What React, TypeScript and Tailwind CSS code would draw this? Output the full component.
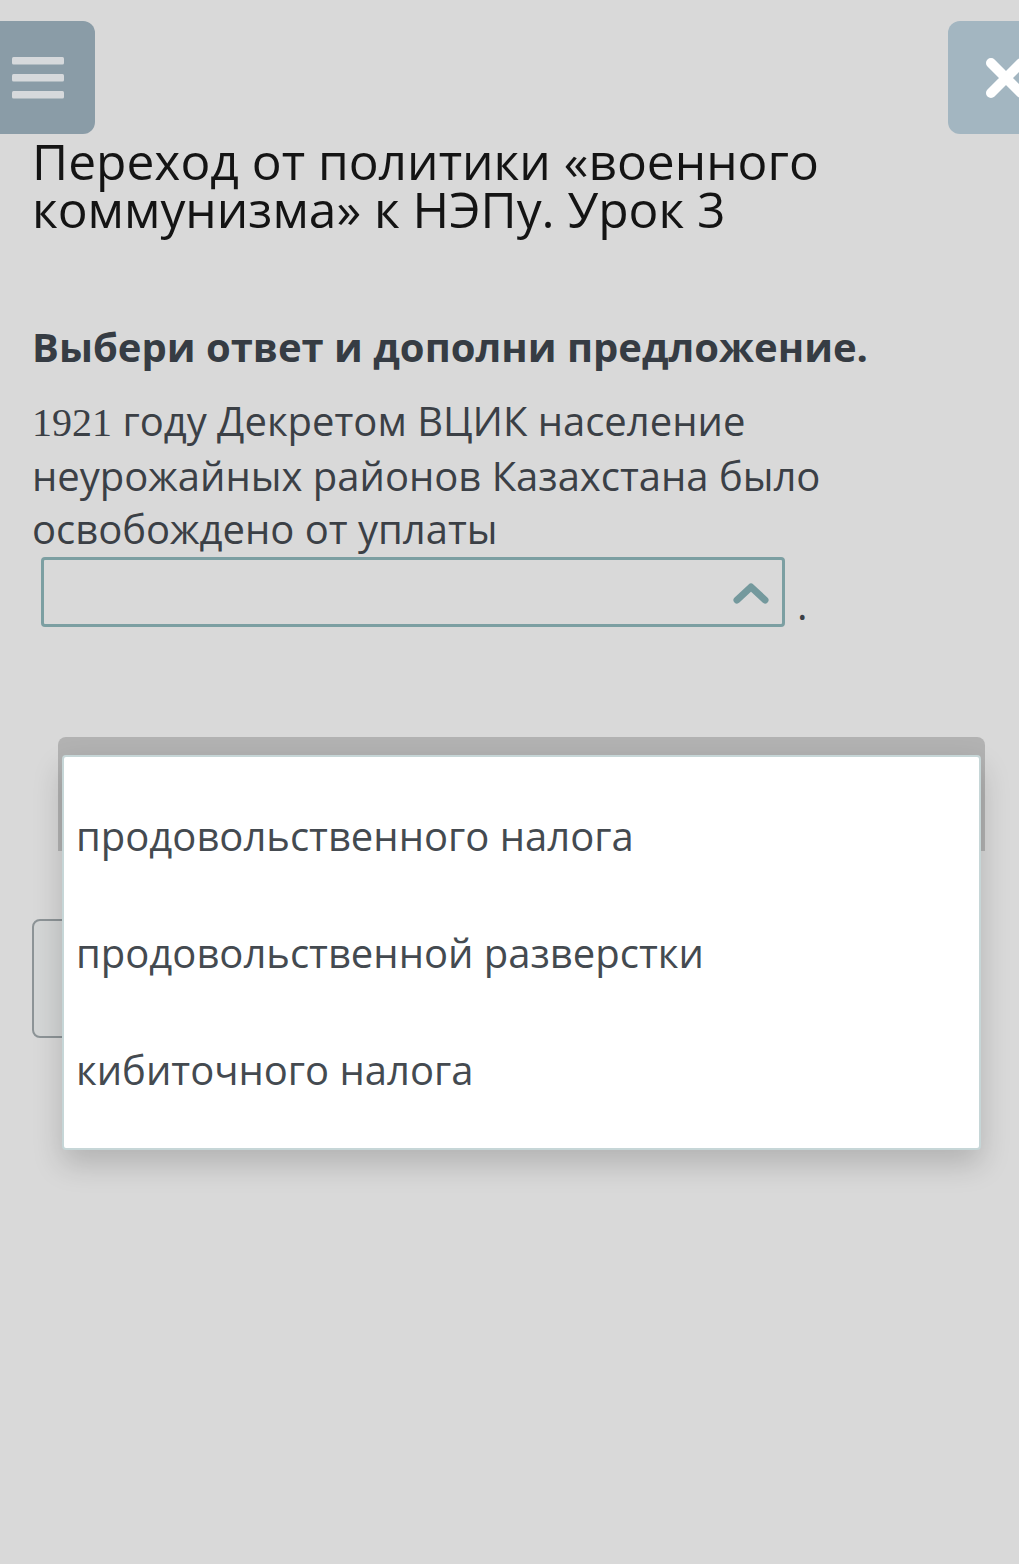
import React from "react";

const options = [
  "продовольственного налога",
  "продовольственной разверстки",
  "кибиточного налога",
];

const MenuIcon = () => (
  <svg width="52" height="42" viewBox="0 0 52 42" fill="#d6d9dc">
    <rect x="0" y="0" width="52" height="7.5" rx="1.5" />
    <rect x="0" y="17" width="52" height="7.5" rx="1.5" />
    <rect x="0" y="34" width="52" height="7.5" rx="1.5" />
  </svg>
);

const CloseIcon = () => (
  <svg width="44" height="44" viewBox="0 0 44 44">
    <path d="M7 7 L37 37 M37 7 L7 37" stroke="#ffffff" strokeWidth="10" strokeLinecap="round" />
  </svg>
);

const Chevron = () => (
  <svg width="38" height="26" viewBox="0 0 38 26">
    <path d="M5 21 L19 8 L33 21" stroke="#74999d" strokeWidth="7" fill="none" strokeLinejoin="round" strokeLinecap="round" />
  </svg>
);

export default function App() {
  return (
    <div className="relative min-h-[1564px] overflow-hidden bg-[#d9d9d9] font-['Open_Sans',sans-serif]">
      <div className="flex justify-between pt-[21px]">
        <button className="ml-[-20px] flex h-[113px] w-[115px] items-center justify-center rounded-xl bg-[#8a9ca7]">
          <MenuIcon />
        </button>
        <button className="mr-[-44px] flex h-[113px] w-[115px] items-center justify-center rounded-xl bg-[#a3b6c1]">
          <CloseIcon />
        </button>
      </div>

      <div className="px-[32px]">
        <h1 className="mt-[3px] text-[49.7px] leading-[48px] font-normal text-[#141414]">
          Переход от политики «военного коммунизма» к НЭПу. Урок 3
        </h1>

        <p className="mt-[88px] text-[40px] leading-[52px] font-bold text-[#363c43]">
          Выбери ответ и дополни предложение.
        </p>

        <p className="mt-[21px] pr-[120px] text-[40px] leading-[53px] text-[#3b4046]">
          <span className="font-['Liberation_Serif',serif]">1921</span> году Декретом ВЦИК население неурожайных
          районов Казахстана было освобождено от уплаты
        </p>

        <div className="mt-[2px] flex items-end">
          <div className="ml-[9px] flex h-[70px] w-[744px] items-center justify-end rounded-[4px] border-[3px] border-[#7c9fa2] pr-[12px]">
            <Chevron />
          </div>
          <span className="ml-[12px] text-[40px] leading-[44px] text-[#3b4046]">.</span>
        </div>
      </div>

      <div className="mt-[110px] ml-[58px] h-[114px] w-[927px] rounded-t-lg bg-[#b2b2b2]" />

      <div className="mt-[68px] ml-[32px] h-[119px] w-[300px] rounded-lg border-2 border-[#8d9497] bg-[#d4d6d6]" />

      <div className="absolute left-[62px] top-[755px] flex h-[395px] w-[919px] flex-col justify-center gap-[58px] rounded-[4px] border-2 border-[#c6d6d7] bg-white px-[12px] shadow-[0_14px_30px_rgba(0,0,0,0.18)]">
        {options.map((o) => (
          <div key={o} className="text-[40px] leading-[59px] text-[#444a50]">
            {o}
          </div>
        ))}
      </div>
    </div>
  );
}
